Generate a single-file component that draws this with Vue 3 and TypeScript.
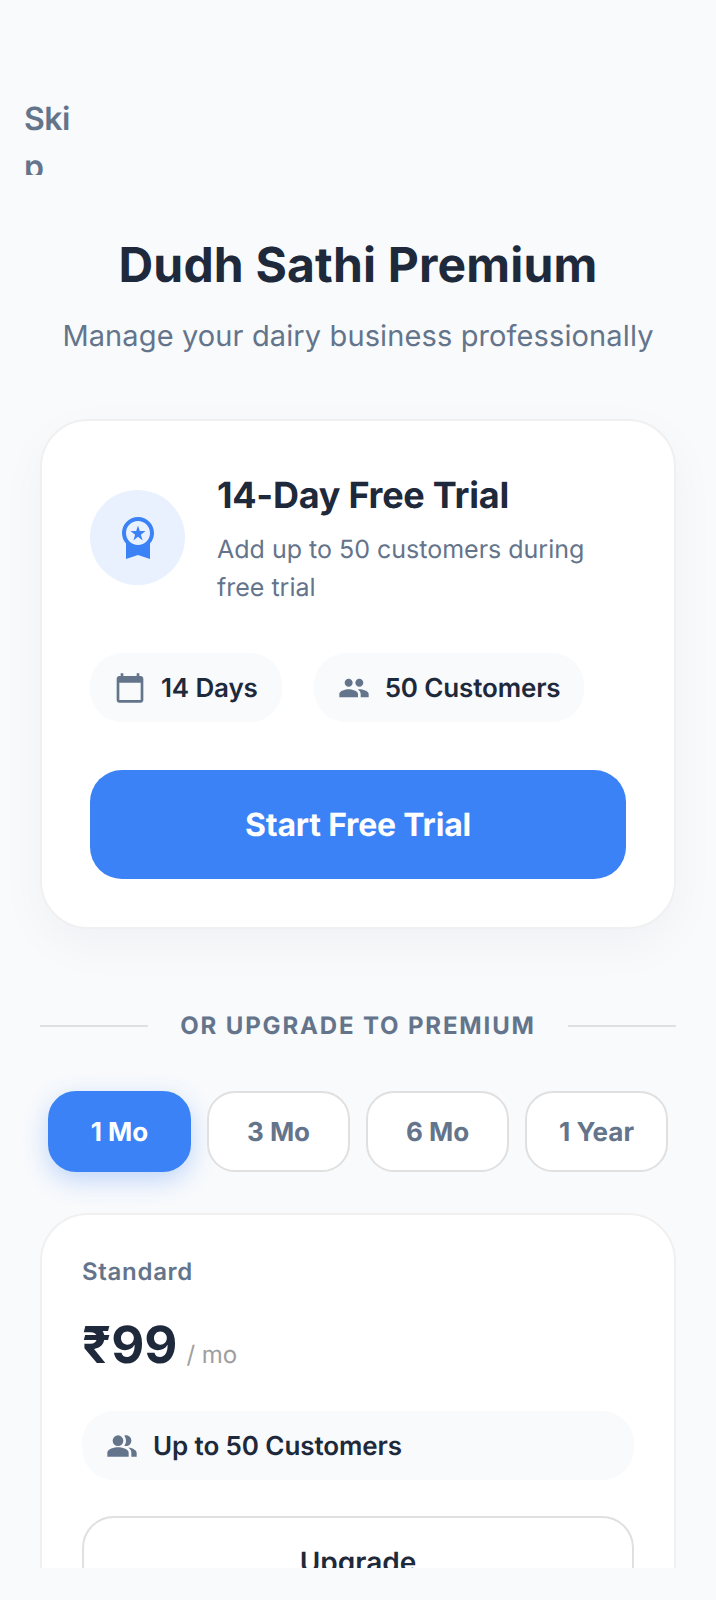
<script setup lang="ts">
const tabs = ['1 Mo', '3 Mo', '6 Mo', '1 Year']
</script>

<template>
  <div class="screen">
    <div class="scroll">
      <div class="skip-bar"><button class="skip">Skip</button></div>
      <header class="head">
        <h1>Dudh Sathi Premium</h1>
        <p>Manage your dairy business professionally</p>
      </header>

      <section class="trial">
        <div class="trial-top">
          <div class="badge">
            <svg viewBox="0 0 24 24" class="i48"><path fill="#3b82f6" d="M9.68,13.69L12,11.93l2.31,1.76l-0.88-2.85L15.75,9h-2.84L12,6.19L11.09,9H8.25l2.31,1.84L9.68,13.69z M20,10c0-4.42-3.58-8-8-8s-8,3.58-8,8c0,2.03,0.76,3.87,2,5.28V23l6-2l6,2v-7.72C19.24,13.87,20,12.03,20,10z M12,4c3.31,0,6,2.69,6,6s-2.69,6-6,6s-6-2.69-6-6S8.69,4,12,4z"/></svg>
          </div>
          <div class="trial-text">
            <h2>14-Day Free Trial</h2>
            <p>Add up to 50 customers during free trial</p>
          </div>
        </div>
        <div class="chips">
          <div class="chip">
            <svg viewBox="0 0 24 24" class="i32"><path d="M20 3h-1V1h-2v2H7V1H5v2H4c-1.1 0-2 .9-2 2v16c0 1.1.9 2 2 2h16c1.1 0 2-.9 2-2V5c0-1.1-.9-2-2-2zm0 18H4V8h16v13z"/></svg>
            <span>14 Days</span>
          </div>
          <div class="chip">
            <svg viewBox="0 0 24 24" class="i32"><path d="M16 11c1.66 0 2.99-1.34 2.99-3S17.66 5 16 5c-1.66 0-3 1.34-3 3s1.34 3 3 3zm-8 0c1.66 0 2.99-1.34 2.99-3S9.66 5 8 5C6.34 5 5 6.34 5 8s1.34 3 3 3zm0 2c-2.33 0-7 1.17-7 3.5V19h14v-2.5c0-2.33-4.67-3.5-7-3.5zm8 0c-.29 0-.62.02-.97.05 1.16.84 1.97 1.97 1.97 3.45V19h6v-2.5c0-2.33-4.67-3.5-7-3.5z"/></svg>
            <span>50 Customers</span>
          </div>
        </div>
        <button class="cta">Start Free Trial</button>
      </section>

      <div class="divider"><i></i><span>OR UPGRADE TO PREMIUM</span><i></i></div>

      <div class="tabs">
        <button v-for="(t, n) in tabs" :key="t" class="tab" :class="{ on: n === 0 }">{{ t }}</button>
      </div>

      <section class="plan">
        <div class="plan-name">Standard</div>
        <div class="price"><b>₹99</b><span>/ mo</span></div>
        <div class="feature">
          <svg viewBox="0 0 24 24" class="i32"><path d="M16.67,13.13C18.04,14.06,19,15.32,19,17v3h4v-3C23,14.82,19.43,13.53,16.67,13.13z"/><circle cx="9" cy="8" r="4"/><path d="M15,12c2.21,0,4-1.79,4-4c0-2.21-1.79-4-4-4c-0.47,0-0.91,0.1-1.33,0.24C14.5,5.27,15,6.58,15,8s-0.5,2.73-1.33,3.76C14.09,11.9,14.53,12,15,12z"/><path d="M9,13c-2.67,0-8,1.34-8,4v3h16v-3C17,14.34,11.67,13,9,13z"/></svg>
          <span>Up to 50 Customers</span>
        </div>
        <button class="upgrade">Upgrade</button>
      </section>
    </div>
  </div>
</template>

<style>
html, body { margin: 0; background: #f8fafc; }
</style>

<style scoped>
.screen {
  width: 716px;
  height: 1600px;
  background: #f8fafc;
  font-family: Inter, "Noto Sans", sans-serif;
  color: #1e293b;
  overflow: hidden;
  text-rendering: geometricPrecision;
}
.scroll { height: 1568px; overflow: hidden; padding: 0 40px; box-sizing: border-box; }
button { font-family: inherit; text-rendering: inherit; }
.skip-bar { height: 178px; margin-left: -16px; padding-top: 95px; box-sizing: border-box; }
.skip {
  display: block;
  width: 48px;
  height: 80px;
  padding: 0;
  border: 0;
  background: none;
  overflow: hidden;
  text-align: left;
  word-break: break-all;
  font-size: 32px;
  line-height: 48px;
  letter-spacing: -0.5px;
  font-weight: 600;
  color: #64748b;
}
.head { text-align: center; margin-top: 58px; }
h1 { margin: 0; font-size: 48px; line-height: 58px; letter-spacing: 0.17px; font-weight: 700; }
.head p { margin: 22px 0 0; font-size: 29px; line-height: 40px; letter-spacing: 0.12px; color: #64748b; }
.trial {
  margin-top: 63px;
  padding: 48px;
  background: #fff;
  border: 2px solid #f0f0f0;
  border-radius: 48px;
  box-shadow: 0 16px 48px rgba(15, 23, 42, 0.04);
}
.trial-top { display: flex; align-items: center; gap: 32px; }
.badge {
  flex: none;
  width: 95px;
  height: 95px;
  border-radius: 50%;
  background: #eaf1fe;
  display: flex;
  align-items: center;
  justify-content: center;
}
.i48 { width: 48px; height: 48px; display: block; }
.i32 { width: 32px; height: 32px; display: block; fill: #64748b; flex: none; }
h2 { margin: 0; font-size: 36px; line-height: 52px; letter-spacing: -0.25px; font-weight: 700; }
.trial-text p { margin: 10px 0 -2px; font-size: 25px; line-height: 38px; color: #64748b; }
.chips { display: flex; gap: 32px; margin-top: 48px; }
.chip {
  display: flex;
  align-items: center;
  gap: 15px;
  height: 69px;
  padding: 2px 24px 0;
  box-sizing: border-box;
  border-radius: 32px;
  background: #f8fafc;
  font-size: 26px;
  letter-spacing: -0.15px;
  font-weight: 600;
}
.chip svg { margin-top: -2px; }
.cta {
  display: block;
  width: 100%;
  height: 109px;
  margin-top: 48px;
  border: 0;
  border-radius: 32px;
  background: #3b82f6;
  color: #fff;
  font-size: 32px;
  letter-spacing: -0.2px;
  font-weight: 700;
}
.divider { display: flex; align-items: center; gap: 32px; margin-top: 79px; }
.divider i { flex: 1; height: 2px; background: #e0e0e0; }
.divider span { font-size: 24px; line-height: 36px; font-weight: 700; letter-spacing: 1.85px; color: #64748b; }
.tabs { display: flex; gap: 16px; margin: 47px 8px 0; }
.tab {
  flex: 1;
  height: 81px;
  padding: 2px 0 0;
  border: 2px solid #e0e0e0;
  border-radius: 28px;
  background: #fff;
  color: #64748b;
  font-size: 26px;
  font-weight: 700;
}
.tab.on { background: #3b82f6; border-color: #3b82f6; color: #fff; box-shadow: 0 8px 24px rgba(59, 130, 246, 0.3); }
.plan {
  margin-top: 41px;
  padding: 41px 40px 40px;
  background: #fff;
  border: 2px solid #f0f0f0;
  border-radius: 48px;
}
.plan-name { font-size: 24px; line-height: 32px; font-weight: 600; letter-spacing: 0.7px; color: #64748b; }
.price { display: flex; align-items: baseline; gap: 9px; margin-top: 23px; }
.price b { font-size: 51px; line-height: 70px; font-weight: 700; }
.price span { font-size: 24px; color: #9e9e9e; }
.feature {
  display: flex;
  align-items: center;
  gap: 15px;
  height: 69px;
  padding: 2px 24px 0;
  box-sizing: border-box;
  margin-top: 30px;
  border-radius: 32px;
  background: #f8fafc;
  font-size: 26px;
  letter-spacing: -0.1px;
  font-weight: 600;
}
.feature svg { margin-top: -2px; }
.upgrade {
  display: block;
  width: 100%;
  height: 100px;
  margin-top: 36px;
  padding: 0 0 8px;
  border: 2px solid #e0e0e0;
  border-radius: 32px;
  background: #fff;
  color: #1e293b;
  font-size: 28px;
  font-weight: 600;
}
</style>
